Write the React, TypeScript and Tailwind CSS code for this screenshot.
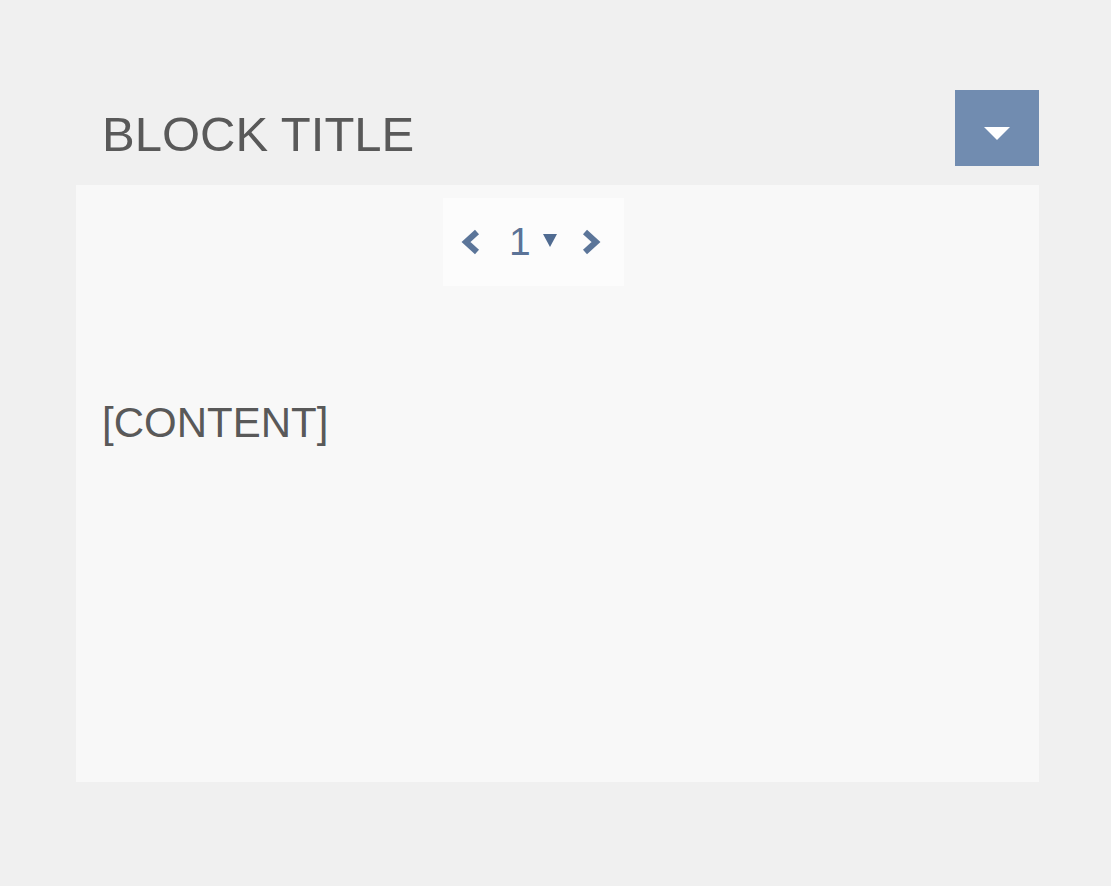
import React from 'react';

const font = { fontFamily: '"Liberation Sans", Arial, sans-serif' };

const Chevron: React.FC<{ dir: 'left' | 'right' }> = ({ dir }) => (
  <svg width="20" height="26" viewBox="0 0 20 26" className="shrink-0">
    <polyline
      points={dir === 'left' ? '16,3 5,13 16,23' : '4,3 15,13 4,23'}
      fill="none"
      stroke="#5b7599"
      strokeWidth="6"
      strokeLinejoin="miter"
    />
  </svg>
);

const App: React.FC = () => {
  return (
    <div className="min-h-[886px] w-full bg-[#f0f0f0]" style={font}>
      <div className="ml-[76px] w-[963px] pt-[90px]">
        {/* header */}
        <div className="flex h-[76px] items-start justify-between">
          <h1 className="mt-[20px] pl-[26px] text-[49px] leading-none font-normal text-[#595959]">
            BLOCK TITLE
          </h1>
          <button className="flex h-[76px] w-[84px] items-start justify-center bg-[#718cb0] pt-[37px]">
            <svg width="26" height="13" viewBox="0 0 26 13">
              <polygon points="0,0 26,0 13,13" fill="#ffffff" />
            </svg>
          </button>
        </div>

        {/* panel */}
        <div className="mt-[19px] h-[597px] bg-[#f8f8f8] pt-[13px]">
          <div className="ml-[367px] flex h-[88px] w-[181px] items-center bg-[#fcfcfc] pl-[18px]">
            <Chevron dir="left" />
            <span className="ml-[28px] mb-[2px] text-[39px] leading-none text-[#5b7397]">1</span>
            <svg width="14" height="13" viewBox="0 0 14 13" className="ml-[12px] mb-[3px]">
              <polygon points="0,0 14,0 7,13" fill="#506b91" />
            </svg>
            <span className="ml-[24px]">
              <Chevron dir="right" />
            </span>
          </div>
          <div className="mt-[116px] pl-[26px] text-[42px] leading-none text-[#595959]">
            [CONTENT]
          </div>
        </div>
      </div>
    </div>
  );
};

export default App;
